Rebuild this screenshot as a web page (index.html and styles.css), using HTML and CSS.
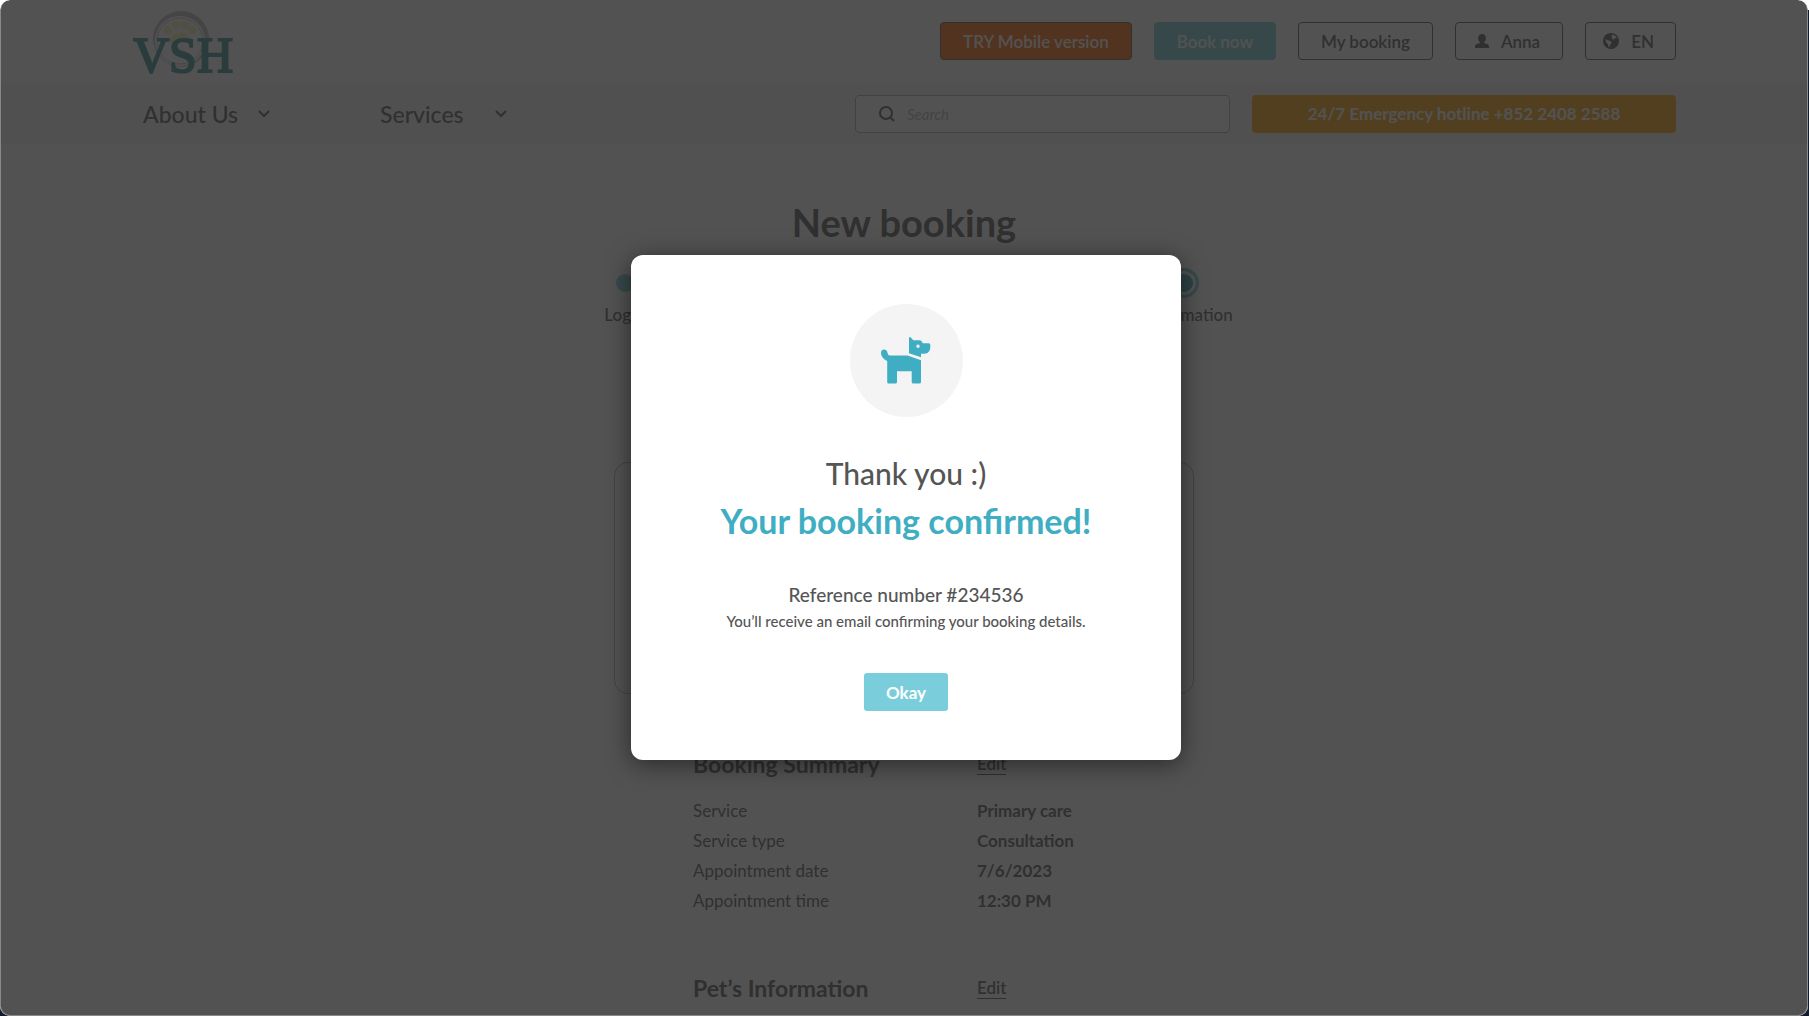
FILE: index.html
```html
<!DOCTYPE html>
<html lang="en">
<head>
    <meta charset="UTF-8">
    <meta name="viewport" content="width=device-width, initial-scale=1.0">
    <title>VSH - New booking</title>
    <link rel="stylesheet" href="styles.css">
</head>
<body>

    <div class="page">
        <header>
            <div class="top-bar">
                <a href="#" class="logo" aria-label="VSH">
                    <svg width="110" height="80" viewBox="0 0 110 80">
                        <path fill="#bebebe" fill-rule="evenodd" d="M48 10a28 28 0 1 1 0 56a28 28 0 0 1 0-56zM47 15a25 25 0 1 0 0 50a25 25 0 0 0 0-50z"/>
                        <circle cx="47" cy="40" r="23" fill="none" stroke="#c4c4c4" stroke-width="1"/>
                        <g fill="#f5eeb0">
                            <circle cx="35" cy="29" r="4"/>
                            <circle cx="43" cy="24" r="4"/>
                            <circle cx="52" cy="24" r="4"/>
                            <circle cx="59" cy="29" r="4"/>
                            <path d="M36 42c2-14 20-14 23 0z"/>
                        </g>
                        <text class="logo-text" x="0" y="71">VSH</text>
                    </svg>
                </a>
                <div class="actions">
                    <button class="btn btn-mobile">TRY Mobile version</button>
                    <button class="btn btn-book">Book now</button>
                    <button class="btn">My booking</button>
                    <button class="btn btn-user">
                        <svg width="14" height="14" viewBox="0 0 14 14" fill="currentColor">
                            <path d="M7 0c2.400 0 3.900 1.700 3.900 4.200 0 1.700-.7 3.200-1.900 4v.9c1.900.4 5 1.200 5 3.600V14H0v-1.300c0-2.400 3.100-3.200 5-3.600v-.9c-1.200-.8-1.900-2.300-1.900-4C3.100 1.700 4.600 0 7 0z"/>
                        </svg>
                        Anna
                    </button>
                    <button class="btn btn-lang">
                        <svg width="16" height="16" viewBox="0 0 16 16">
                            <circle cx="8" cy="8" r="8" fill="#555"/>
                            <path fill="#fff" d="M9.500 1.500c1.800.5 3.400 1.600 4.200 3.200l-1.900.6-1.300 1.300-1.500-.4.400-1.500-1.100-1zM2.200 6l2.600 1.200 2.700.8 1.100 1.500-.4 1.500-1.300 1-.5 2.200-1.100-.4-.2-2.600-1.700-1.500z"/>
                        </svg>
                        EN
                    </button>
                </div>
            </div>

            <div class="nav-bar">
                <nav>
                    <a href="#">About Us
                        <svg width="12" height="8" viewBox="0 0 12 8"><path d="M1 1l5 5 5-5"/></svg>
                    </a>
                    <a href="#">Services
                        <svg width="12" height="8" viewBox="0 0 12 8"><path d="M1 1l5 5 5-5"/></svg>
                    </a>
                </nav>
                <div class="nav-right">
                    <label class="search" for="search">
                        <svg width="16" height="16" viewBox="0 0 16 16"><circle cx="7" cy="7" r="6"/><path d="M11 11l4 4"/></svg>
                        <input type="text" id="search" placeholder="Search" aria-label="Search">
                    </label>
                    <a href="tel:+85224082588" class="hotline">24/7 Emergency hotline +852 2408 2588</a>
                </div>
            </div>
        </header>

        <main>
            <h1>New booking</h1>

            <ol class="steps">
                <li><span class="dot"></span>Login</li>
                <li class="current"><span class="dot"></span>Confirmation</li>
            </ol>

            <div class="card"></div>

            <section class="summary">
                <div class="row heading">
                    <h2>Booking Summary</h2>
                    <a href="#">Edit</a>
                </div>
                <dl>
                    <div class="row"><dt>Service</dt><dd>Primary care</dd></div>
                    <div class="row"><dt>Service type</dt><dd>Consultation</dd></div>
                    <div class="row"><dt>Appointment date</dt><dd>7/6/2023</dd></div>
                    <div class="row"><dt>Appointment time</dt><dd>12:30 PM</dd></div>
                </dl>
            </section>

            <section class="summary">
                <div class="row heading">
                    <h2>Pet’s Information</h2>
                    <a href="#">Edit</a>
                </div>
            </section>
        </main>

        <div class="overlay" id="overlay">
            <div class="modal" role="dialog" aria-modal="true" aria-labelledby="modal-title">
                <div class="modal-icon">
                    <svg width="50" height="47" viewBox="0 0 50 47" fill="#40aec2">
                        <path d="M3 12.500c2.200 0 3.300 1.400 3.500 3.300.2 1.600 1 2.700 2.500 2.700h17.500L40 23.300V45q0 1.500-1.500 1.500h-6.300q-1.500 0-1.500-1.500V34.200H16V45q0 1.500-1.500 1.500H7.700Q6.200 46.500 6.200 45V24C2.500 22.500 0 19.300 0 15.800c0-1.900 1.100-3.300 3-3.300z"/>
                        <path fill-rule="evenodd" d="M28 1q0-1.500 1.500-.7L32.300 3.200h6.200c1.700 0 2.400 1 3.200 3h6.100q1.500 0 1.500 1.500v2.300c0 4-2.300 6.700-6 6.700h-3.300v3.500L28 16.200zM37 7.500a1.700 1.700 0 1 0 0 3.400 1.700 1.700 0 0 0 0-3.400z"/>
                    </svg>
                </div>
                <p class="thanks">Thank you :)</p>
                <h2 id="modal-title">Your booking confirmed!</h2>
                <p class="reference">Reference number #234536</p>
                <p class="note">You’ll receive an email confirming your booking details.</p>
                <button class="okay" onclick="closeModal()">Okay</button>
            </div>
        </div>
    </div>

    <script>
        function closeModal() {
            document.getElementById('overlay').classList.add('closed');
        }
    </script>

</body>
</html>
```
FILE: styles.css
```css
* {
    margin: 0;
    padding: 0;
    box-sizing: border-box;
}

html {
    min-height: 100%;
    background: linear-gradient(#ffffff 10px, #101c2b 10px);
}

body {
    font-family: Lato, sans-serif;
    font-size: 17px;
    line-height: 24px;
    color: #555;
}

a {
    color: inherit;
    text-decoration: none;
}

button,
input {
    font-family: inherit;
}

.page {
    position: relative;
    min-height: 100vh;
    margin-right: 1px;
    background-color: #fff;
    border-radius: 10px;
    overflow: hidden;
}

.top-bar,
.nav-bar {
    display: flex;
    align-items: center;
    justify-content: space-between;
    padding: 0 132px 0 133px;
}

.top-bar {
    height: 84px;
    padding-bottom: 2px;
}

.nav-bar {
    height: 60px;
    background-color: #f5f5f5;
}

.logo svg {
    display: block;
}

.logo-text {
    font-family: "Liberation Serif", serif;
    font-size: 50px;
    fill: #3c8f8f;
    stroke: #3c8f8f;
    stroke-width: 2px;
}

.actions {
    display: flex;
    gap: 22px;
}

.btn {
    display: flex;
    align-items: center;
    gap: 12px;
    height: 38px;
    padding: 0 22px;
    border: 1px solid #555;
    border-radius: 4px;
    background-color: #fff;
    color: #555;
    font-size: 17px;
    font-weight: 600;
    cursor: pointer;
}

.btn-mobile {
    background-color: #ff6400;
    color: #fff;
}

.btn-book {
    background-color: #7acedb;
    border-color: #7acedb;
    color: #fff;
}

.btn-user {
    padding: 0 22px 0 19px;
}

.btn-lang {
    padding: 0 21px 0 17px;
}

nav {
    display: flex;
    gap: 110px;
    padding-left: 10px;
}

nav a {
    display: flex;
    align-items: center;
    justify-content: space-between;
    width: 127px;
    font-size: 23px;
    font-weight: 500;
}

nav svg,
.search svg {
    fill: none;
    stroke: #555;
    stroke-width: 2;
}

.nav-right {
    display: flex;
    gap: 22px;
}

.search {
    display: flex;
    align-items: center;
    gap: 12px;
    width: 375px;
    height: 38px;
    padding: 0 23px;
    border: 1px solid #b0b0b0;
    border-radius: 4px;
    background-color: #fff;
}

.search input {
    flex: 1;
    min-width: 0;
    border: none;
    outline: none;
    background: none;
    font-size: 15px;
}

.search input::placeholder {
    color: #b4b4b4;
    font-style: italic;
}

.hotline {
    width: 424px;
    border-radius: 4px;
    background-color: #ffa000;
    color: #fff;
    font-weight: 700;
    line-height: 38px;
    text-align: center;
}

main {
    display: flex;
    flex-direction: column;
    align-items: center;
    padding-top: 54px;
}

h1 {
    font-size: 38px;
    line-height: 48px;
}

.steps {
    display: flex;
    justify-content: space-between;
    width: 679px;
    margin-top: 22px;
    list-style: none;
    font-weight: 500;
}

.steps li {
    display: flex;
    flex-direction: column;
    align-items: center;
    gap: 5px;
    width: 120px;
}

.dot {
    width: 30px;
    height: 30px;
    border: 6px solid #fff;
    border-radius: 50%;
    background-color: #7acedb;
}

.current .dot {
    border: 3px solid #7acedb;
    background-color: #40aec2;
    box-shadow: inset 0 0 0 3px #fff;
}

/* selected clinic */
.card {
    width: 580px;
    height: 232px;
    margin: 135px 0 58px;
    border: 1px solid #b0b0b0;
    border-radius: 14px;
}

.summary {
    width: 422px;
    margin-bottom: 60px;
}

.summary:last-child {
    margin-bottom: 0;
}

.row {
    display: flex;
    line-height: 30px;
}

.row > :first-child {
    width: 284px;
}

.heading {
    align-items: center;
}

.heading h2 {
    font-size: 23px;
    line-height: 24px;
}

.heading a {
    border-bottom: 1px solid #555;
    font-weight: 600;
    line-height: 20px;
}

dl {
    margin-top: 20px;
}

dd {
    font-weight: 700;
}

.overlay {
    position: absolute;
    inset: 0;
    display: flex;
    align-items: center;
    justify-content: center;
    padding-left: 4px;
    border: 1px solid #888;
    border-top: none;
    border-radius: 10px;
    background-color: rgba(39, 39, 39, 0.8);
}

.overlay.closed {
    display: none;
}

.modal {
    display: flex;
    flex-direction: column;
    align-items: center;
    width: 550px;
    padding: 49px 40px;
    border-radius: 12px;
    background-color: #fff;
    box-shadow: 0 4px 24px rgba(0, 0, 0, 0.5);
    text-align: center;
}

.modal-icon {
    display: flex;
    align-items: center;
    justify-content: center;
    width: 113px;
    height: 113px;
    margin-bottom: 32px;
    border-radius: 50%;
    background-color: #f4f4f4;
}

.thanks {
    font-size: 30px;
    font-weight: 500;
    line-height: 48px;
}

.modal h2 {
    margin-bottom: 36px;
    color: #40aec2;
    font-size: 34px;
    line-height: 48px;
}

.reference {
    font-size: 19px;
    font-weight: 500;
    line-height: 28px;
}

.note {
    margin-bottom: 40px;
    font-size: 15px;
    font-weight: 500;
}

.okay {
    height: 38px;
    padding: 0 22px;
    border: none;
    border-radius: 3px;
    background-color: #7acedb;
    color: #fff;
    font-size: 17px;
    font-weight: 700;
    cursor: pointer;
}
```
